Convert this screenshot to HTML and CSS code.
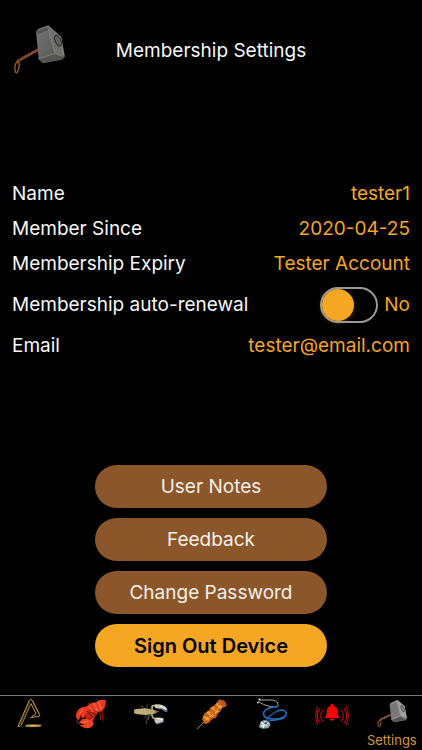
FILE: index.html
```html
<!DOCTYPE html>
<html lang="en">
<head>
<meta charset="utf-8">
<meta name="viewport" content="width=device-width, initial-scale=1">
<title>Membership Settings</title>
<link rel="stylesheet" href="styles.css">
</head>
<body>
<header class="header">
  <svg class="header-logo" viewBox="36 24 162 171" aria-hidden="true">
    <defs>
      <linearGradient id="steel" x1="0" y1="0" x2="1" y2="1"><stop offset="0" stop-color="#747474"/><stop offset=".55" stop-color="#626260"/><stop offset="1" stop-color="#464644"/></linearGradient>
    </defs>
    <path d="M113 108 54 141" stroke="#703e25" stroke-width="9" stroke-linecap="round"/>
    <path d="m108 107-5 11m-5-6-5 11m-5-6-5 11m-5-6-5 11m-5-6-5 11" stroke="#a3623c" stroke-width="2"/>
    <path d="M54 141c-7 5-10 13-9 24 0 14 6 15 10 2 4-11 4-19-1-26" fill="none" stroke="#a65a30" stroke-width="4"/>
    <path d="m145 34 39 34 11 60-8 9-58 11-13-12-8-84 7-8z" fill="url(#steel)"/>
    <path d="m145 35 38 33 11 59-29-9-19-76z" fill="#7b7b79"/>
    <path d="m108 52 37-14 3 9-34 13zM116 134l46-14 24 16-57 11z" fill="#555552"/>
    <path d="m145 36 7 8 27 25 8 55-20-8-18-70z" fill="#6e6e6c"/>
    <path d="m143 37 22 82 25 9M116 134l48-15" fill="none" stroke="#8b8b88" stroke-width="2"/>
    <ellipse cx="174" cy="80" rx="8" ry="17" transform="rotate(-24 174 80)" fill="#686866" stroke="#292929" stroke-width="3"/>
    <path d="m168 67 12 27" stroke="#4b4b4b" stroke-width="2"/>
  </svg>
  <h1 class="title">Membership Settings</h1>
</header>
<main class="main">
  <dl class="details">
    <div class="row"><dt>Name</dt><dd>tester1</dd></div>
    <div class="row"><dt>Member Since</dt><dd>2020-04-25</dd></div>
    <div class="row"><dt>Membership Expiry</dt><dd>Tester Account</dd></div>
    <div class="row"><dt><label for="renewal">Membership auto-renewal</label></dt><dd class="renewal"><input class="switch" type="checkbox" role="switch" id="renewal"><span>No</span></dd></div>
    <div class="row"><dt>Email</dt><dd>tester@email.com</dd></div>
  </dl>
  <div class="actions">
    <button class="button" type="button">User Notes</button>
    <button class="button" type="button">Feedback</button>
    <button class="button" type="button">Change Password</button>
    <button class="button button-primary" type="button">Sign Out Device</button>
  </div>
</main>
<nav class="tabs">
  <a class="tab" href="#home" aria-label="Home">
    <svg class="tab-icon" viewBox="36 24 108 96" aria-hidden="true">
      <defs><linearGradient id="gold"><stop offset="0" stop-color="#8d621e"/><stop offset=".5" stop-color="#f3cf76"/><stop offset="1" stop-color="#9b7027"/></linearGradient></defs>
      <g fill="none" stroke="#c79843" stroke-width="3" stroke-linejoin="round">
        <path d="M54 109 88 31q5-5 9 0l22 43q2 5-4 5l-23 4 16-12-15-30-29 64q-4 7-10 4z"/>
        <path d="m63 103 29-63" stroke="#674719" stroke-width="2"/>
      </g>
      <path d="M90 34 59 104m38-71 19 38" stroke="#f0cc78" stroke-width="1"/>
      <path d="M79 104h45l-3 6H75z" fill="url(#gold)" stroke="#cfa453" stroke-width="1"/>
    </svg>
  </a>
  <a class="tab" href="#lobster" aria-label="Lobster">
    <svg class="tab-icon" viewBox="216 24 108 96" aria-hidden="true">
      <path d="m252 78-12 4-10 14 3 7m20-15-17 12m54-39 18 3 1 28m-10-27 4 25m-48-13-17 24" fill="none" stroke="#a51f14" stroke-width="3"/>
      <path d="m260 50 10-9 21-6 9-5 17-1v11l-3 13-8 10-15 4-14 9-15-8z" fill="#e93a22"/>
      <path d="M261 50c-16-2-28 8-32 20-3 10 0 17 6 20l8-14 5 9c12-9 18-24 13-35z" fill="#ed3821"/>
      <path d="M237 99c4-11 16-15 28-12l13-8 6 5-7 9c8 4 3 17-9 21-12 2-22-2-29-9l18-1z" fill="#f04429"/>
      <path d="m259 62 16-4 20 8-9 14-17 12-13-7z" fill="#c4281a"/>
      <path d="m268 50 12 16m0-28 13 25m2-31 8 27m-53-2-13 16m12 25 17-5" fill="none" stroke="#ff795a" stroke-width="3"/>
      <path d="m273 67 15 7-20 12m-6-23 13 15" stroke="#651a12" stroke-width="3" fill="none"/>
      <path d="m260 51 7-12 8-1" stroke="#bd2c19" stroke-width="2" fill="none"/>
    </svg>
  </a>
  <a class="tab" href="#crayfish" aria-label="Crayfish">
    <svg class="tab-icon" viewBox="39 24 108 96" aria-hidden="true">
      <path d="m76 59-7-9-7-2m19 9V46l5-5m2 17 7-12m-13 27-10 13m16-12-10 20 2 8m8-27-3 14" fill="none" stroke="#877853" stroke-width="2"/>
      <path d="m42 59 7-2 26-2 26 4 14 6-14 7-25 3-27-3-7-2z" fill="#b8a575"/>
      <path d="m49 58 4 15m4-16 4 16m4-17 4 17m5-18 4 18" stroke="#d8c796" stroke-width="2"/>
      <path d="m96 60 1-12 13-3m-15 27 3 11 15 6" fill="none" stroke="#bba878" stroke-width="5"/>
      <path d="M102 46c10-6 28-3 38 8l2 10-4 2-14-9-18-3z" fill="#c8c9bf"/>
      <path d="M103 86c5-5 18-4 29 0l-3 9-17 8c-5-4-9-8-9-17" fill="#cbc8b5"/>
      <path d="m121 49 17 8m-26 28 17 4" stroke="#f6f4e8" stroke-width="3"/>
      <path d="m124 55 16 9 2-8m-30 45 18-3 1-10" fill="none" stroke="#24509a" stroke-width="3"/>
      <path d="m103 66 14-2" stroke="#745a31" stroke-width="2"/>
    </svg>
  </a>
  <a class="tab" href="#skewer" aria-label="Skewer">
    <svg class="tab-icon" viewBox="219 24 108 96" aria-hidden="true">
      <path d="m231 118 25-27" stroke="#a58470" stroke-width="3"/>
      <path d="m246 87 7-17 13-8 6-11 11-5 11-13 4-5 15 4 7 11-3 7-12 4-4 10-8 7-5 12-12 4-10 12-11 4z" fill="#c9611b"/>
      <path d="m255 81 9 5m1-18 12 8m3-21 12 9m1-20 9 7" fill="none" stroke="#ef9736" stroke-width="9" stroke-linecap="round"/>
      <path d="m258 91 5-6m12-10-4 6m17-15-2 5m13-21-2 5" stroke="#ffc45a" stroke-width="3"/>
      <path d="m256 76 4 4m12-10 4 5m9-19 4 5m6-20 4 5" stroke="#8f3d12" stroke-width="3"/>
      <path d="m298 32 12 2 6 9-9 1" fill="none" stroke="#a84e36" stroke-width="5"/>
    </svg>
  </a>
  <a class="tab" href="#health" aria-label="Health">
    <svg class="tab-icon" viewBox="39 24 108 96" aria-hidden="true">
      <path d="M113 50c5-11-5-20-22-20-13-1-27 2-34-1m56 21c-14 2-37-1-59-16" fill="none" stroke="#a8aaa7" stroke-width="3"/>
      <path d="m51 37 5 2m0-13 5 5" stroke="#e5e5df" stroke-width="4"/>
      <path d="M113 49c-24 3-43 10-43 23 0 19 46 21 63 9 16-12 0-28-21-18-17 8-38 25-33 38" fill="none" stroke="#154e8c" stroke-width="5"/>
      <path d="M112 49c-23 3-41 10-41 22 0 17 44 20 61 9 14-11 0-25-20-16M76 96c17-8 46-1 59-17" fill="none" stroke="#2681cc" stroke-width="3"/>
      <path d="m60 99 5-7 11-2 12 6 4 9-7 10-19 1-9-5z" fill="#8d9ca5"/>
      <path d="m63 97 19 11m-20 1 24-10m-11-6-5 21" stroke="#e8f0ef" stroke-width="4"/>
      <circle cx="77" cy="100" r="4" fill="#4b6170"/>
    </svg>
  </a>
  <a class="tab" href="#alerts" aria-label="Alerts">
    <svg class="tab-icon" viewBox="222 24 108 96" aria-hidden="true">
      <path d="M276 42c3 0 5 2 5 6 10 3 12 10 12 21 0 7 2 11 6 14v1h-46v-1c5-3 7-7 7-14 0-11 2-18 11-21 0-4 2-6 5-6M268 86h16c-1 7-15 7-16 0" fill="#f00"/>
      <path d="M248 60q-13 17 0 34m-8-39q-17 22 0 44m-7-49q-12 27 0 54m71-44q13 17 0 34m8-39q17 22 0 44m7-49q12 27 0 54" fill="none" stroke="#df0c0c" stroke-width="3" stroke-linecap="round"/>
    </svg>
  </a>
  <a class="tab" href="#settings" aria-current="page">
    <svg class="tab-icon" viewBox="402 24 108 96" aria-hidden="true">
      <path d="m453 74-32 15" stroke="#7c4a3a" stroke-width="5" stroke-linecap="round"/>
      <path d="m449 73-3 6m-4-3-3 6m-4-3-3 6m-4-3-3 6" stroke="#bd8069" stroke-width="2"/>
      <path d="M421 89c-6 3-8 8-6 18 2 7 5 4 7-5 1-7 0-11-1-13" fill="none" stroke="#a56246" stroke-width="3"/>
      <path d="m472 29 22 19 7 36-4 7-35 6-8-8-5-45 4-6z" fill="#777775"/>
      <path d="m472 30 22 19 6 34-17-6z" fill="#a09f9d"/>
      <path d="m454 89 28-11 15 12-35 6z" fill="#555"/>
      <path d="m450 43 21-9 11 43 17 6m-45 6 28-12" fill="none" stroke="#aaa9a6" stroke-width="2"/>
      <ellipse cx="488" cy="56" rx="4" ry="10" transform="rotate(-24 488 56)" fill="#888" stroke="#383838" stroke-width="2"/>
    </svg>
    <span>Settings</span>
  </a>
</nav>
</body>
</html>
```
FILE: styles.css
```css
* {
  box-sizing: border-box;
}

body {
  display: flex;
  flex-direction: column;
  min-height: 100vh;
  margin: 0;
  background: #000;
  color: #f7f7f7;
  font: 19px/24px Inter, "Liberation Sans", sans-serif;
}

.header {
  display: grid;
  grid-template-columns: 54px 1fr 54px;
  align-items: center;
  padding: 22px 12px;
}

.header-logo {
  width: 54px;
  height: 57px;
}

.title {
  margin: 0;
  font-size: 19px;
  font-weight: 400;
  text-align: center;
}

.main {
  display: flex;
  flex: 1;
  flex-direction: column;
  padding: 81px 12px 28px;
}

.details {
  display: grid;
  gap: 11px;
  margin: 0;
}

.row {
  display: flex;
  align-items: center;
  justify-content: space-between;
}

.row dd {
  margin: 0;
  color: #f5a623;
}

.row .renewal {
  display: flex;
  align-items: center;
  gap: 6px;
}

.switch {
  display: flex;
  align-items: center;
  width: 58px;
  height: 36px;
  margin: 0;
  border: 2px solid #999;
  border-radius: 18px;
  appearance: none;
}

.switch::before {
  width: 32px;
  height: 32px;
  border-radius: 50%;
  background: #f5a623;
  box-shadow: 0 2px 6px #f5a62340;
  content: "";
}

.switch:checked::before {
  margin-left: auto;
}

.actions {
  display: grid;
  gap: 10px;
  width: 232px;
  margin: auto auto 0;
}

.button {
  height: 43px;
  padding: 0 16px;
  border: 0;
  border-radius: 22px;
  background: #8b572a;
  color: #f7f0e8;
  font: inherit;
}

.button-primary {
  background: #f5a623;
  color: #000;
  font-size: 20px;
  font-weight: 600;
}

.tabs {
  display: grid;
  grid-template-columns: repeat(7, 1fr);
  height: 55px;
  padding-top: 2px;
  border-top: 1px solid #777;
}

.tab {
  display: flex;
  flex-direction: column;
  align-items: center;
  gap: 2px;
  color: #d1963b;
  font-size: 13px;
  line-height: 16px;
  text-decoration: none;
}

.tab-icon {
  width: 36px;
  height: 32px;
}
```
